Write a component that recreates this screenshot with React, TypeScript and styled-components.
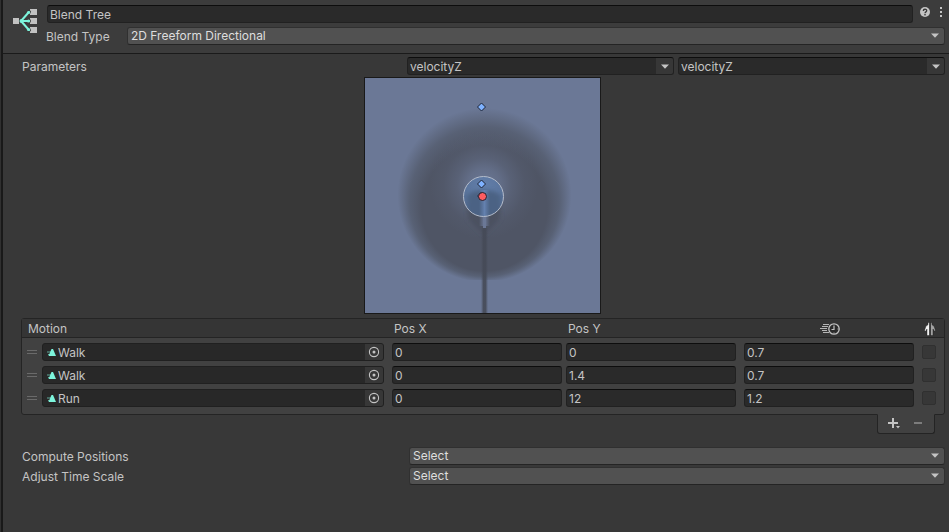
import React from "react";
import styled, { createGlobalStyle, css } from "styled-components";

const GlobalStyle = createGlobalStyle`
  *, *::before, *::after { box-sizing: border-box; }
  html, body { margin: 0; min-height: 100%; background: #383838; }
  body, input, select, button, table {
    font-family: Inter, "Liberation Sans", sans-serif;
    font-size: 12px;
    line-height: 16px;
    color: #c4c4c4;
  }
`;

const Window = styled.div`
  display: flex;
  min-height: 100vh;
  background: #383838;
`;

const DockEdge = styled.div`
  flex: none;
  width: 3px;
  background: #191919;
  border-left: 1px solid #303030;
`;

const Inspector = styled.main`
  flex: 1;
  min-width: 0;
`;

const Header = styled.header`
  display: flex;
  gap: 8px;
  padding: 5px 4px 8px 9px;
  background: #3c3c3c;
  border-bottom: 1px solid #1a1a1a;
`;

const HeaderIcon = styled.svg`
  flex: none;
  width: 26px;
  height: 26px;
  margin-top: 3px;
`;

const HeaderFields = styled.div`
  flex: 1;
  min-width: 0;
  display: flex;
  flex-direction: column;
  gap: 4px;
`;

const HeaderRow = styled.div`
  display: flex;
  align-items: center;
`;

const NameRow = styled(HeaderRow)`
  padding-left: 1px;
`;

const HeaderActions = styled.div`
  flex: none;
  display: flex;
  align-items: center;
  justify-content: space-between;
  width: 32px;
  padding: 0 3px 4px 7px;
  height: 18px;
`;

const IconButton = styled.button`
  display: flex;
  align-items: center;
  justify-content: center;
  padding: 0;
  border: 0;
  background: none;
`;

const fieldFrame = css`
  height: 18px;
  border: 1px solid #212121;
  border-top-color: #0d0d0d;
  border-radius: 3px;
  background: #2a2a2a;
`;

const TextInput = styled.input`
  ${fieldFrame}
  display: block;
  width: 100%;
  min-width: 0;
  padding: 1px 2px 0;
  outline: none;
`;

const FieldLabel = styled.label`
  padding-top: 2px;
  white-space: nowrap;
`;

const TypeLabel = styled(FieldLabel)`
  flex: none;
  width: 81px;
`;

const SelectFrame = styled.div`
  position: relative;
  flex: 1;
  min-width: 0;
`;

const Select = styled.select`
  appearance: none;
  display: block;
  width: 100%;
  height: 18px;
  padding: 0 20px 0 3px;
  border: 1px solid #303030;
  border-bottom-color: #242424;
  border-radius: 3px;
  background: #515151;
  color: #dedede;
  line-height: 16px;
  outline: none;
`;

const SelectArrow = styled.span`
  position: absolute;
  top: 0;
  right: 6px;
  height: 17px;
  display: flex;
  align-items: center;
  pointer-events: none;
`;

const Body = styled.div`
  display: flex;
  flex-direction: column;
  padding: 3px 4px 0 19px;
`;

const ParameterRow = styled.div`
  display: grid;
  grid-template-columns: 381fr 267fr 267fr;
  column-gap: 4px;
  align-items: center;
`;

const Combo = styled.div`
  ${fieldFrame}
  display: flex;
  overflow: hidden;
`;

const ComboInput = styled.input`
  flex: 1;
  min-width: 0;
  padding: 1px 2px 0;
  border: 0;
  background: transparent;
  outline: none;
`;

const FieldButton = styled(IconButton)`
  flex: none;
  width: 17px;
  background: #373737;
`;

const PickerButton = styled(FieldButton)`
  width: 18px;
`;

const Graph = styled.svg`
  align-self: center;
  width: 237px;
  height: 237px;
  margin: 2px 2px 0 0;
  border: 1px solid #191919;
`;

const MotionList = styled.section`
  display: flex;
  flex-direction: column;
  margin: 4px 0 0 -1px;
`;

const MotionTable = styled.table`
  display: block;
  border: 1px solid #242424;
  border-radius: 3px;
  background: #414141;
`;

const TableHead = styled.thead`
  display: block;
  background: #353535;
  border-bottom: 1px solid #242424;
`;

const TableBody = styled.tbody`
  display: flex;
  flex-direction: column;
  gap: 5px;
  padding: 5px 0 7px;
`;

const TableRow = styled.tr`
  display: grid;
  grid-template-columns: 20px 350fr 174fr 178fr 178fr 22px;
  height: 18px;
`;

const HeadCell = styled.th<{ $span?: number; $indent?: number }>`
  grid-column: span ${(p) => p.$span ?? 1};
  display: flex;
  align-items: center;
  padding: 2px 0 0 ${(p) => p.$indent ?? 0}px;
  font-weight: 400;
`;

const IconHeadCell = styled(HeadCell)`
  justify-content: center;
  padding: 1px 6px 0 0;
`;

const Cell = styled.td<{ $gap?: number }>`
  display: block;
  min-width: 0;
  padding: 0 ${(p) => p.$gap ?? 0}px 0 0;
`;

const HandleCell = styled(Cell)`
  display: flex;
  justify-content: center;
  padding-top: 7px;
`;

const Handle = styled.span`
  width: 10px;
  height: 4px;
  border: solid #6a6a6a;
  border-width: 1px 0;
`;

const ObjectField = styled(Combo)`
  border-color: #202020;
  background: #282828;
  align-items: stretch;
`;

const ClipIcon = styled.svg`
  flex: none;
  width: 11px;
  height: 16px;
  margin-left: 3px;
`;

const ClipInput = styled(ComboInput)`
  padding-left: 1px;
`;

const MirrorBox = styled.input`
  appearance: none;
  display: block;
  width: 14px;
  height: 14px;
  margin: 2px 0 0;
  border: 1px solid #303030;
  border-radius: 2px;
  background: #373737;
`;

const ListFooter = styled.div`
  align-self: flex-end;
  display: flex;
  align-items: center;
  width: 58px;
  height: 20px;
  margin: -1px 10px 0 0;
  padding: 0 12px 2px 9px;
  justify-content: space-between;
  border: 1px solid #242424;
  border-top-color: #414141;
  border-radius: 0 0 3px 3px;
  background: #414141;
`;

const Actions = styled.div`
  display: flex;
  flex-direction: column;
  gap: 2px;
  margin-top: 13px;
`;

const ActionRow = styled.div`
  display: grid;
  grid-template-columns: 383fr 536fr;
  column-gap: 4px;
  align-items: center;
`;

const Arrow = () => (
  <svg width="8" height="5" viewBox="0 0 8 5" aria-hidden="true">
    <path d="M0 0.5H8L4 4.8Z" fill="#c4c4c4" />
  </svg>
);

const TreeIcon = () => (
  <HeaderIcon viewBox="0 0 26 26" aria-hidden="true">
    <g fill="#c2c2c2">
      <rect x="1" y="10" width="6" height="6" />
      <rect x="18" y="1" width="7" height="6" />
      <rect x="18" y="10" width="7" height="6" />
      <rect x="18" y="19" width="7" height="6" />
    </g>
    <g stroke="#3c3c3c" strokeWidth="4" strokeLinecap="round" fill="none">
      <path d="M9 13L17 4M9 13H17M9 13L17 22" />
    </g>
    <g stroke="#7df5dc" strokeWidth="2" strokeLinecap="round" fill="none">
      <path d="M9 13L17 4M9 13H17M9 13L17 22" />
    </g>
    <g fill="#7df5dc">
      <circle cx="9.500" cy="13" r="2" />
      <circle cx="16.500" cy="4.500" r="1.600" />
      <circle cx="16.500" cy="13" r="1.600" />
      <circle cx="16.500" cy="21.500" r="1.600" />
    </g>
  </HeaderIcon>
);

const HelpIcon = () => (
  <svg width="10" height="10" viewBox="0 0 10 10" aria-hidden="true">
    <circle cx="5" cy="5" r="5" fill="#c4c4c4" />
    <path d="M3.300 3.900C3.300 1.700 6.700 1.700 6.700 3.800C6.700 4.900 5 4.900 5 6.200" fill="none" stroke="#383838" strokeWidth="1.300" />
    <rect x="4.300" y="7" width="1.400" height="1.400" fill="#383838" />
  </svg>
);

const MenuIcon = () => (
  <svg width="2" height="10" viewBox="0 0 2 10" fill="#c4c4c4" aria-hidden="true">
    <rect width="2" height="2" />
    <rect y="4" width="2" height="2" />
    <rect y="8" width="2" height="2" />
  </svg>
);

const PickerIcon = () => (
  <svg width="12" height="12" viewBox="0 0 12 12" aria-hidden="true">
    <circle cx="6" cy="6" r="4.600" fill="none" stroke="#c4c4c4" strokeWidth="1.100" />
    <circle cx="6" cy="6" r="1.500" fill="#c4c4c4" />
  </svg>
);

const SpeedIcon = () => (
  <svg width="20" height="12" viewBox="0 0 20 12" fill="none" stroke="#c4c4c4" aria-hidden="true">
    <path d="M3 1.500H9M2 3.500H8M0 5.500H7M2 7.500H7M3 9.500H9" strokeWidth="0.900" />
    <circle cx="14" cy="6" r="5.200" fill="#2b2b2b" strokeWidth="1.300" />
    <path d="M14 2.500V6.500H11.500" strokeWidth="1.200" />
    <path d="M14 9.500V10.500M17.500 6H18.500" strokeWidth="0.900" />
  </svg>
);

const MirrorIcon = () => (
  <svg width="12" height="14" viewBox="0 0 12 14" aria-hidden="true">
    <path d="M5.500 0.500H4.200L3.800 3L2 4L0.500 8.500L1.500 9.300L3 7V13.500H5.500Z" fill="#f2f2f2" stroke="#151515" strokeWidth="0.400" />
    <path d="M6.500 0.500H7.800L8.200 3L10 4L11.500 8.500L10.500 9.300L9 7V13.500H6.500Z" fill="#a2a2a2" stroke="#151515" strokeWidth="0.400" />
    <path d="M6 0V14" stroke="#222222" strokeWidth="0.700" />
  </svg>
);

const PlusIcon = () => (
  <svg width="13" height="12" viewBox="0 0 13 12" aria-hidden="true">
    <path d="M6 1V11M1 6H11" stroke="#c4c4c4" strokeWidth="2" />
    <path d="M9 9H13L11 11.500Z" fill="#c4c4c4" />
  </svg>
);

const MinusIcon = () => (
  <svg width="8" height="12" viewBox="0 0 8 12" aria-hidden="true">
    <path d="M0 6H8" stroke="#7c7c7c" strokeWidth="2" />
  </svg>
);

const Diamond = ({ x, y }: { x: number; y: number }) => (
  <path
    d={`M${x} ${y - 4}L${x + 4} ${y}L${x} ${y + 4}L${x - 4} ${y}Z`}
    fill="#7fb2ff"
    stroke="#1b2233"
  />
);

const BlendGraph = () => (
  <Graph viewBox="0 0 235 235" role="img" aria-label="Blend space">
    <defs>
      <radialGradient id="field" gradientUnits="userSpaceOnUse" cx="119.500" cy="117" r="87" fx="119.500" fy="165">
        <stop offset="0" stopColor="#4f5565" />
        <stop offset="0.720" stopColor="#4f5565" />
        <stop offset="0.860" stopColor="#586175" />
        <stop offset="1" stopColor="#6b7896" />
      </radialGradient>
      <radialGradient id="glow">
        <stop offset="0" stopColor="#6b7896" />
        <stop offset="0.300" stopColor="#6b7896" stopOpacity="0.700" />
        <stop offset="0.500" stopColor="#6b7896" stopOpacity="0.350" />
        <stop offset="0.750" stopColor="#6b7896" stopOpacity="0.100" />
        <stop offset="1" stopColor="#6b7896" stopOpacity="0" />
      </radialGradient>
      <linearGradient id="seam">
        <stop offset="0" stopColor="#454a57" stopOpacity="0" />
        <stop offset="0.350" stopColor="#454a57" stopOpacity="0.900" />
        <stop offset="0.650" stopColor="#454a57" stopOpacity="0.900" />
        <stop offset="1" stopColor="#454a57" stopOpacity="0" />
      </linearGradient>
      <linearGradient id="ray">
        <stop offset="0" stopColor="#6b7896" stopOpacity="0" />
        <stop offset="0.500" stopColor="#6f7d9e" />
        <stop offset="1" stopColor="#6b7896" stopOpacity="0" />
      </linearGradient>
      <clipPath id="floor">
        <rect width="235" height="202" />
      </clipPath>
      <filter id="soft">
        <feGaussianBlur stdDeviation="2" />
      </filter>
    </defs>
    <rect width="235" height="235" fill="#6b7896" />
    <circle cx="119.500" cy="117" r="87" fill="url(#field)" clipPath="url(#floor)" />
    <circle cx="119" cy="107" r="54" fill="url(#glow)" />
    <path d="M102 118C108 110 130 110 136 118L135 141L119 157L103 141Z" fill="#4b5161" filter="url(#soft)" />
    <rect x="114" y="112" width="11" height="36" fill="url(#ray)" />
    <rect x="118" y="138" width="3" height="12" fill="#6b7896" />
    <rect x="116" y="150" width="7" height="85" fill="url(#seam)" />
    <circle cx="118.500" cy="118.500" r="20" fill="#4d8ad8" fillOpacity="0.300" stroke="#b4bccb" />
    <Diamond x={116.5} y={29} />
    <Diamond x={116.5} y={106} />
    <Diamond x={116.5} y={118} />
    <circle cx="117.500" cy="118.500" r="4" fill="#ff5c60" stroke="#202433" />
  </Graph>
);

const motions = [
  { clip: "Walk", x: "0", y: "0", speed: "0.7" },
  { clip: "Walk", x: "0", y: "1.4", speed: "0.7" },
  { clip: "Run", x: "0", y: "12", speed: "1.2" },
];

const parameterAxes = ["X", "Y"];

const actions = [
  { id: "compute-positions", label: "Compute Positions" },
  { id: "adjust-time-scale", label: "Adjust Time Scale" },
];

export default function App() {
  return (
    <>
      <GlobalStyle />
      <Window>
        <DockEdge />
        <Inspector>
          <Header>
            <TreeIcon />
            <HeaderFields>
              <NameRow>
                <TextInput aria-label="Name" defaultValue="Blend Tree" />
                <HeaderActions>
                  <IconButton aria-label="Help">
                    <HelpIcon />
                  </IconButton>
                  <IconButton aria-label="More options">
                    <MenuIcon />
                  </IconButton>
                </HeaderActions>
              </NameRow>
              <HeaderRow>
                <TypeLabel htmlFor="blend-type">Blend Type</TypeLabel>
                <SelectFrame>
                  <Select id="blend-type">
                    <option>2D Freeform Directional</option>
                  </Select>
                  <SelectArrow>
                    <Arrow />
                  </SelectArrow>
                </SelectFrame>
              </HeaderRow>
            </HeaderFields>
          </Header>
          <Body>
            <ParameterRow>
              <FieldLabel htmlFor="parameter-X">Parameters</FieldLabel>
              {parameterAxes.map((axis) => (
                <Combo key={axis}>
                  <ComboInput
                    id={`parameter-${axis}`}
                    aria-label={`Parameter ${axis}`}
                    defaultValue="velocityZ"
                  />
                  <FieldButton aria-label={`Choose parameter ${axis}`}>
                    <Arrow />
                  </FieldButton>
                </Combo>
              ))}
            </ParameterRow>
            <BlendGraph />
            <MotionList>
              <MotionTable>
                <TableHead>
                  <TableRow>
                    <HeadCell colSpan={2} $span={2} $indent={6}>Motion</HeadCell>
                    <HeadCell $indent={2}>Pos X</HeadCell>
                    <HeadCell $indent={2}>Pos Y</HeadCell>
                    <IconHeadCell aria-label="Speed">
                      <SpeedIcon />
                    </IconHeadCell>
                    <IconHeadCell aria-label="Mirror">
                      <MirrorIcon />
                    </IconHeadCell>
                  </TableRow>
                </TableHead>
                <TableBody>
                  {motions.map((motion, index) => (
                    <TableRow key={index}>
                      <HandleCell>
                        <Handle />
                      </HandleCell>
                      <Cell $gap={8}>
                        <ObjectField>
                          <ClipIcon viewBox="0 0 11 16" aria-hidden="true">
                            <path d="M1 8H5M2 10.500H4" stroke="#5fa899" />
                            <path d="M5.500 5H7L10 12H2.500Z" fill="#7df5dc" />
                          </ClipIcon>
                          <ClipInput aria-label="Motion" defaultValue={motion.clip} />
                          <PickerButton aria-label="Select motion">
                            <PickerIcon />
                          </PickerButton>
                        </ObjectField>
                      </Cell>
                      <Cell $gap={4}>
                        <TextInput aria-label="Pos X" defaultValue={motion.x} />
                      </Cell>
                      <Cell $gap={8}>
                        <TextInput aria-label="Pos Y" defaultValue={motion.y} />
                      </Cell>
                      <Cell $gap={8}>
                        <TextInput aria-label="Speed" defaultValue={motion.speed} />
                      </Cell>
                      <Cell>
                        <MirrorBox type="checkbox" aria-label="Mirror" />
                      </Cell>
                    </TableRow>
                  ))}
                </TableBody>
              </MotionTable>
              <ListFooter>
                <IconButton aria-label="Add motion">
                  <PlusIcon />
                </IconButton>
                <IconButton aria-label="Remove motion">
                  <MinusIcon />
                </IconButton>
              </ListFooter>
            </MotionList>
            <Actions>
              {actions.map((action) => (
                <ActionRow key={action.id}>
                  <FieldLabel htmlFor={action.id}>{action.label}</FieldLabel>
                  <SelectFrame>
                    <Select id={action.id}>
                      <option>Select</option>
                    </Select>
                    <SelectArrow>
                      <Arrow />
                    </SelectArrow>
                  </SelectFrame>
                </ActionRow>
              ))}
            </Actions>
          </Body>
        </Inspector>
      </Window>
    </>
  );
}
